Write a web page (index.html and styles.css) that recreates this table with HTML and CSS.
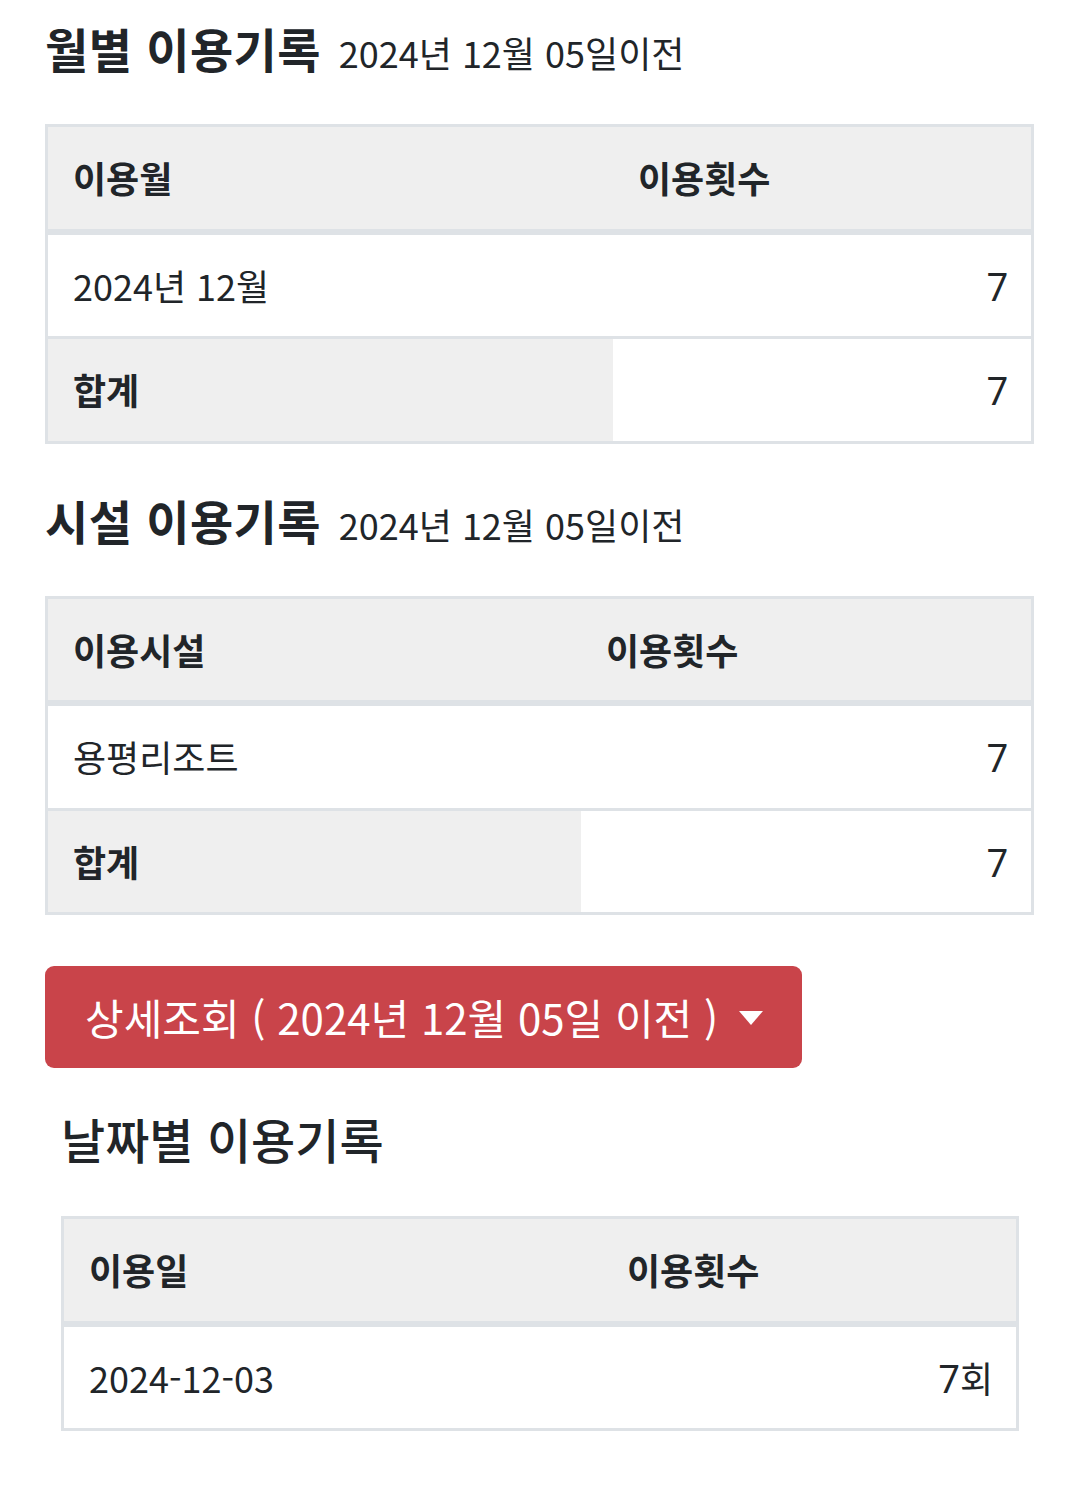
FILE: index.html
```html
<!DOCTYPE html>
<html lang="ko">
<head>
<meta charset="utf-8">
<title>이용기록</title>
<link rel="stylesheet" href="styles.css">
</head>
<body>
<div class="page">
  <section class="block">
    <h2 class="title">월별 이용기록 <small class="sub">2024년 12월 05일이전</small></h2>
    <table class="grid">
      <colgroup><col class="c-month"><col></colgroup>
      <thead>
        <tr><th>이용월</th><th>이용횟수</th></tr>
      </thead>
      <tbody>
        <tr><td>2024년 12월</td><td class="val"><span class="num">7</span></td></tr>
        <tr><th>합계</th><td class="val"><span class="num">7</span></td></tr>
      </tbody>
    </table>
  </section>

  <section class="block block-last">
    <h2 class="title">시설 이용기록 <small class="sub">2024년 12월 05일이전</small></h2>
    <table class="grid">
      <colgroup><col class="c-facility"><col></colgroup>
      <thead>
        <tr><th>이용시설</th><th>이용횟수</th></tr>
      </thead>
      <tbody>
        <tr><td>용평리조트</td><td class="val"><span class="num">7</span></td></tr>
        <tr><th>합계</th><td class="val"><span class="num">7</span></td></tr>
      </tbody>
    </table>
  </section>

  <button class="btn-detail" type="button">상세조회 ( 2024년 12월 05일 이전 )</button>

  <div class="detail">
    <h3 class="detail-title">날짜별 이용기록</h3>
    <table class="grid">
      <colgroup><col class="c-day"><col></colgroup>
      <thead>
        <tr><th>이용일</th><th>이용횟수</th></tr>
      </thead>
      <tbody>
        <tr><td>2024-12-03</td><td class="val"><span class="num">7</span>회</td></tr>
      </tbody>
    </table>
  </div>
</div>
</body>
</html>
```

FILE: styles.css
```css
html, body {
  margin: 0;
  padding: 0;
  background: #ffffff;
}

body {
  font-family: "Noto Sans CJK KR", "Noto Sans", sans-serif;
  color: #212529;
}

.page {
  padding: 22px 46px 60px 45px;
}

.block {
  margin-bottom: 50px;
}

.block-last {
  margin-bottom: 51px;
}

.title {
  margin: 0 0 50px 0;
  font-size: 47px;
  line-height: 52px;
  font-weight: 700;
  letter-spacing: 0.5px;
  color: #212529;
}

.sub {
  font-size: 36px;
  line-height: 1;
  font-weight: 400;
  letter-spacing: 0;
  margin-left: 4px;
}

.grid {
  width: 100%;
  border-collapse: separate;
  border-spacing: 0;
  border: 3px solid #dee2e6;
  table-layout: fixed;
  margin: 0;
  font-size: 36px;
  line-height: 51.5px;
}

.c-month { width: 565px; }
.c-facility { width: 533px; }
.c-day { width: 538px; }

.grid th,
.grid td {
  padding: 25px;
  text-align: left;
  vertical-align: middle;
}

.grid th {
  background: #efefef;
  font-weight: 700;
}

.grid td {
  background: #ffffff;
  font-weight: 400;
}

.grid thead th {
  border-bottom: 6px solid #dee2e6;
}

.grid tbody tr + tr th,
.grid tbody tr + tr td {
  border-top: 3px solid #dee2e6;
}

.grid td.val {
  text-align: right;
  padding-right: 23px;
}

.num {
  font-family: Roboto, "Noto Sans", sans-serif;
  font-size: 38px;
  line-height: 1;
}

.btn-detail {
  display: inline-block;
  margin: 0;
  padding: 20px 39px 20px 40px;
  border: 0;
  border-radius: 9px;
  background: #c9444a;
  color: #ffffff;
  font-family: "Noto Sans CJK KR", "Noto Sans", sans-serif;
  font-size: 42px;
  line-height: 62px;
  font-weight: 400;
  cursor: pointer;
}

.btn-detail::after {
  content: "";
  display: inline-block;
  margin-left: 21px;
  vertical-align: 10px;
  border-top: 14px solid #ffffff;
  border-left: 12px solid transparent;
  border-right: 12px solid transparent;
}

.detail {
  margin: 40px 15px 0 16px;
}

.detail-title {
  margin: 0 0 48px 0;
  font-size: 48px;
  line-height: 60px;
  font-weight: 500;
  color: #212529;
}
```
